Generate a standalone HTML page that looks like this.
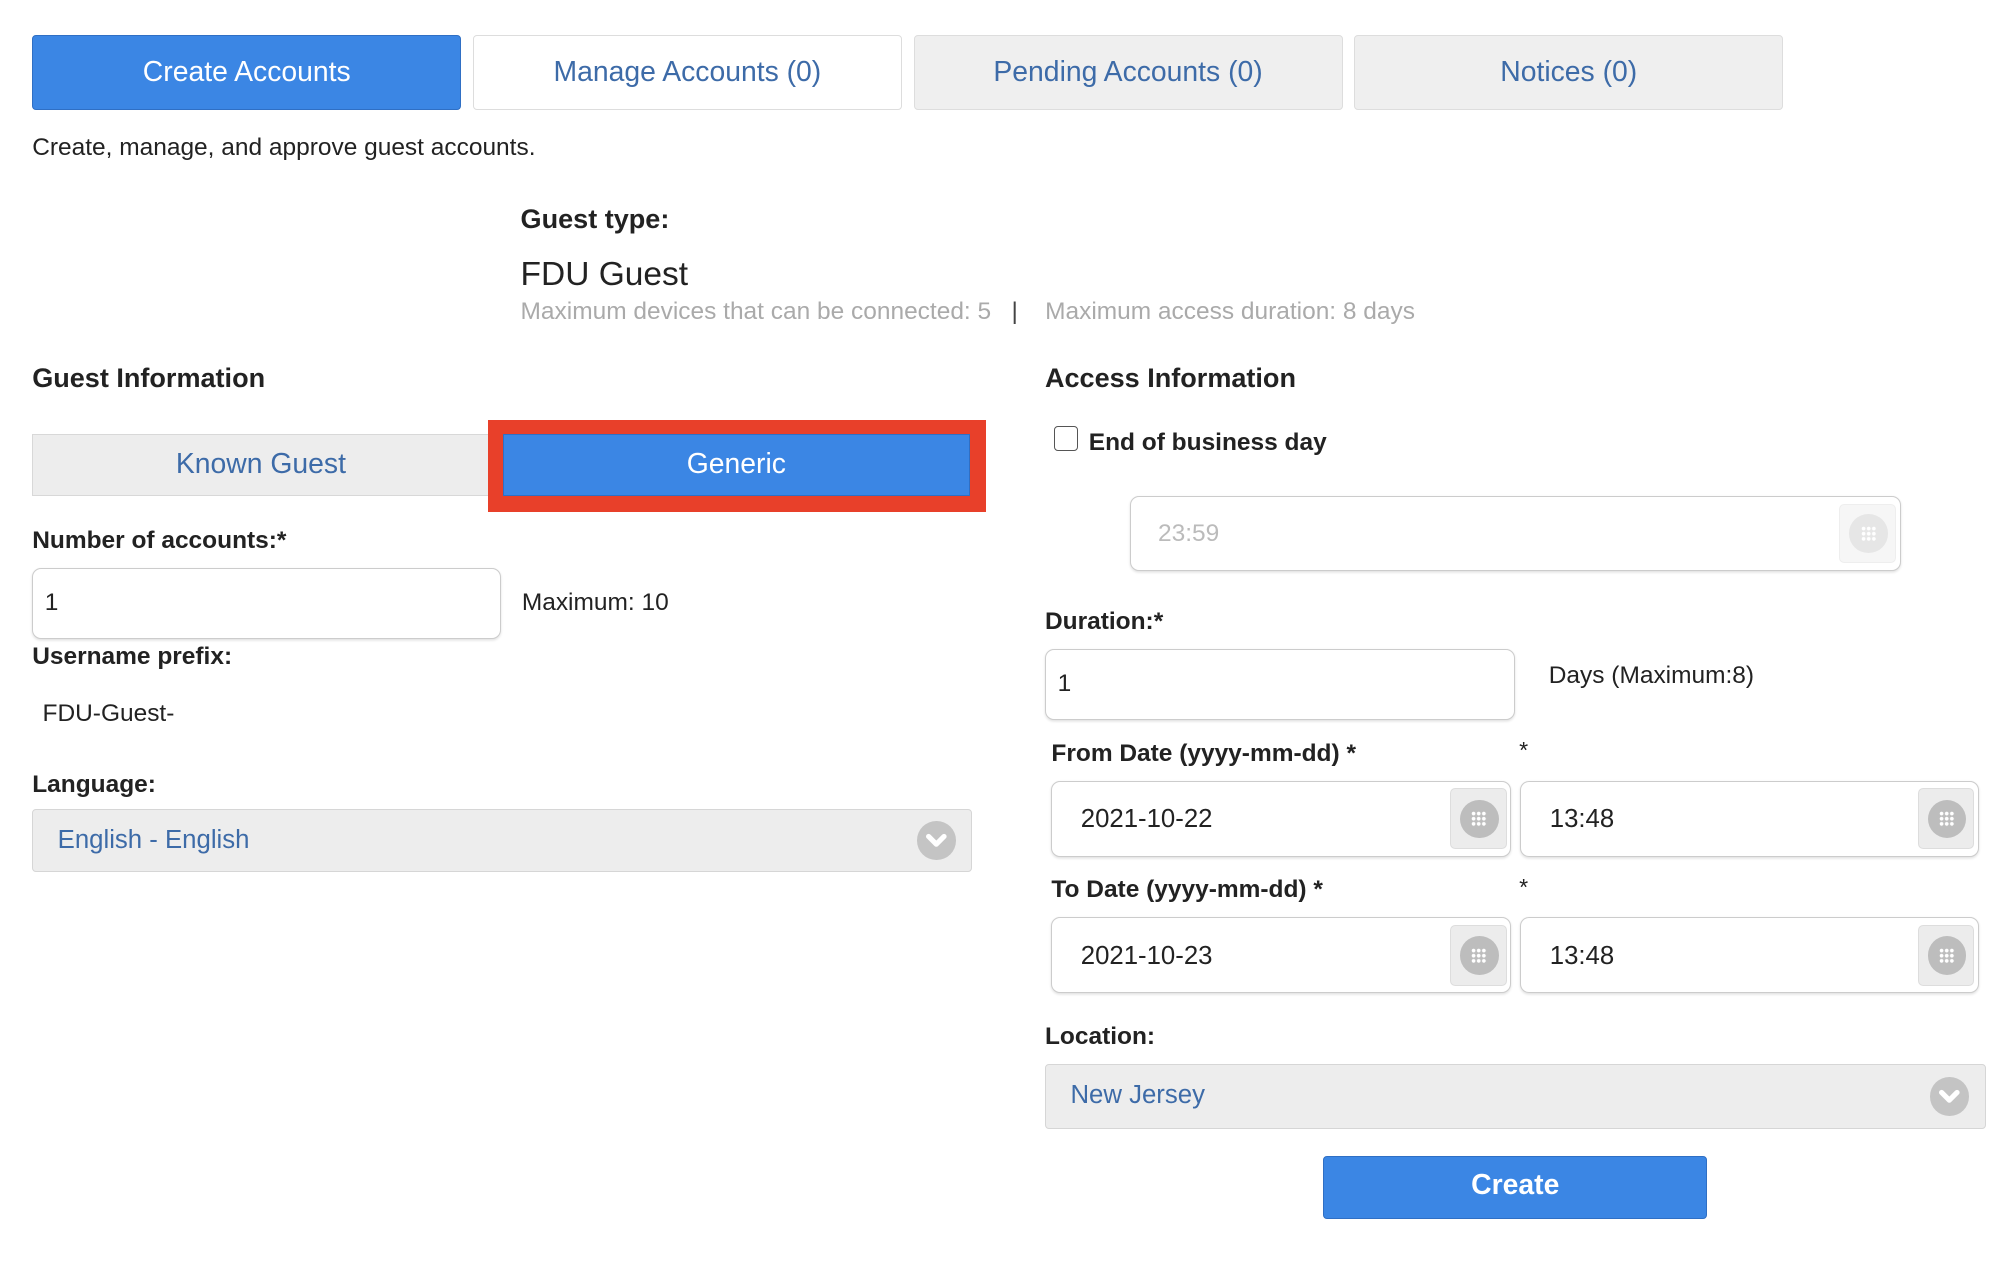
<!DOCTYPE html>
<html><head><meta charset="utf-8"><style>
html,body{margin:0;padding:0;background:#fff;width:2010px;height:1262px;overflow:hidden}
#w{position:relative;width:1560px;height:980px;zoom:1.2885;font-family:"Liberation Sans",Arial,sans-serif;color:#222}
.a{position:absolute;white-space:nowrap}
.tab{position:absolute;top:27px;height:56px;border:1px solid #ddd;border-radius:3px;background:#efefef;color:#3d6ba8;font-size:22px;line-height:56px;text-align:center;box-sizing:border-box;height:58px}
.b{font-weight:bold;font-size:20px;color:#222}
.inp{position:absolute;border:1.5px solid #ccc;border-radius:7px;background:#fff;box-sizing:border-box;box-shadow:0 1px 2px rgba(0,0,0,.12)}
.inp span{position:absolute;font-size:20px;color:#222}
.ib{position:absolute;width:44px;top:5px;bottom:5px;right:3px;background:#ececec;border:1px solid #ddd;border-radius:4px;box-sizing:border-box}
.ib i{position:absolute;left:7px;top:50%;margin-top:-15px;width:30px;height:30px;border-radius:50%;background:#bdbdbd}
.ib i:after{content:"";position:absolute;left:9px;top:9px;width:12px;height:12px;background:
radial-gradient(circle,#fff 1.3px,transparent 1.6px) 0 0/4px 4px}
.sel{position:absolute;background:#ededed;border:1px solid #d6d6d6;border-radius:3px;box-sizing:border-box;color:#3d6ba8;font-size:20px}
.chev{position:absolute;width:30px;height:30px;border-radius:50%;background:#c4c4c4;top:50%;margin-top:-15px}
</style></head><body><div id="w">
<div class="tab" style="left:25px;width:333px;background:#3b86e4;border-color:#2f6fc4;color:#fff">Create Accounts</div>
<div class="tab" style="left:367px;width:333px;background:#fff">Manage Accounts (0)</div>
<div class="tab" style="left:709px;width:333px">Pending Accounts (0)</div>
<div class="tab" style="left:1051px;width:333px">Notices (0)</div>
<div class="a" style="left:25px;top:104px;font-size:19px">Create, manage, and approve guest accounts.</div>
<div class="a b" style="left:404px;top:158px;font-size:21px">Guest type:</div>
<div class="a" style="left:404px;top:199px;font-size:26px;color:#222">FDU Guest</div>
<div class="a" style="left:404px;top:231px;font-size:19px;color:#aaa">Maximum devices that can be connected: 5 &nbsp;&nbsp;<span style="color:#444">|</span>&nbsp;&nbsp;&nbsp; Maximum access duration: 8 days</div>
<div class="a b" style="left:25px;top:282px;font-size:21px">Guest Information</div>
<div class="a b" style="left:811px;top:282px;font-size:21px">Access Information</div>
<div class="a" style="left:25px;top:337px;width:365px;height:48px;background:#ededed;border:1px solid #d8d8d8;box-sizing:border-box;color:#3d6ba8;font-size:22px;line-height:46px;text-align:center;padding-right:10px">Known Guest</div>
<div class="a" style="left:379px;top:326px;width:386px;height:71px;background:#e8402a"></div>
<div class="a" style="left:390px;top:337px;width:363px;height:48px;background:#3b86e4;border:1px solid #2f6fc4;box-sizing:border-box;color:#fff;font-size:22px;line-height:46px;text-align:center">Generic</div>
<div class="a b" style="left:25px;top:409px;font-size:19px">Number of accounts:*</div>
<div class="inp" style="left:25px;top:441px;width:364px;height:55px"><span style="left:9px;top:15px;font-size:19px">1</span></div>
<div class="a" style="left:405px;top:457px;font-size:19px">Maximum: 10</div>
<div class="a b" style="left:25px;top:499px;font-size:19px">Username prefix:</div>
<div class="a" style="left:33px;top:543px;font-size:19px">FDU-Guest-</div>
<div class="a b" style="left:25px;top:598px;font-size:19px">Language:</div>
<div class="sel" style="left:25px;top:628px;width:729px;height:49px"><span class="a" style="left:19px;top:12px">English - English</span><div class="chev" style="left:686px"><svg width="30" height="30" viewBox="0 0 30 30"><path d="M9 12l6 6 6-6" stroke="#fff" stroke-width="4" fill="none" stroke-linecap="round" stroke-linejoin="round"/></svg></div></div>
<div class="a" style="left:818px;top:331px;width:19px;height:19px;border:1.5px solid #555;border-radius:3px;box-sizing:border-box;background:#fff"></div>
<div class="a b" style="left:845px;top:333px;font-size:19px">End of business day</div>
<div class="inp" style="left:877px;top:385px;width:598px;height:58px"><span style="left:21px;top:18px;color:#bbb;font-size:19px">23:59</span><div class="ib" style="background:#f6f6f6;border-color:#eee"><i style="background:#e6e6e6"></i></div></div>
<div class="a b" style="left:811px;top:472px;font-size:19px">Duration:*</div>
<div class="inp" style="left:811px;top:504px;width:365px;height:55px"><span style="left:9px;top:15px;font-size:19px">1</span></div>
<div class="a" style="left:1202px;top:514px;font-size:19px">Days (Maximum:8)</div>
<div class="a b" style="left:816px;top:574px;font-size:19px">From Date (yyyy-mm-dd) *</div>
<div class="a" style="left:1179px;top:572px;font-size:18px">*</div>
<div class="inp" style="left:816px;top:606px;width:357px;height:59px"><span style="left:22px;top:18px">2021-10-22</span><div class="ib"><i></i></div></div>
<div class="inp" style="left:1180px;top:606px;width:356px;height:59px"><span style="left:22px;top:18px">13:48</span><div class="ib"><i></i></div></div>
<div class="a b" style="left:816px;top:680px;font-size:19px">To Date (yyyy-mm-dd) *</div>
<div class="a" style="left:1179px;top:678px;font-size:18px">*</div>
<div class="inp" style="left:816px;top:712px;width:357px;height:59px"><span style="left:22px;top:18px">2021-10-23</span><div class="ib"><i></i></div></div>
<div class="inp" style="left:1180px;top:712px;width:356px;height:59px"><span style="left:22px;top:18px">13:48</span><div class="ib"><i></i></div></div>
<div class="a b" style="left:811px;top:794px;font-size:19px">Location:</div>
<div class="sel" style="left:811px;top:826px;width:730px;height:50px"><span class="a" style="left:19px;top:12px">New Jersey</span><div class="chev" style="left:686px"><svg width="30" height="30" viewBox="0 0 30 30"><path d="M9 12l6 6 6-6" stroke="#fff" stroke-width="4" fill="none" stroke-linecap="round" stroke-linejoin="round"/></svg></div></div>
<div class="a" style="left:1027px;top:897px;width:298px;height:49px;background:#3b86e4;border:1px solid #2f6fc4;border-radius:3px;box-sizing:border-box;color:#fff;font-weight:bold;font-size:22px;line-height:45px;text-align:center">Create</div>
</div></body></html>
